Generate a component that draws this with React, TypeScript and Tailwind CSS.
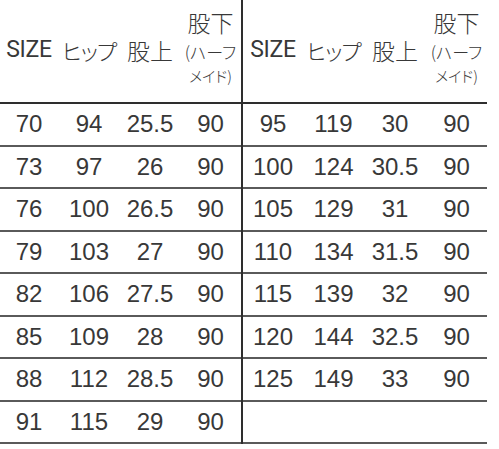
const leftRows: (string | number)[][] = [
  [70, 94, '25.5', 90],
  [73, 97, 26, 90],
  [76, 100, '26.5', 90],
  [79, 103, 27, 90],
  [82, 106, '27.5', 90],
  [85, 109, 28, 90],
  [88, 112, '28.5', 90],
  [91, 115, 29, 90],
];

const rightRows: ((string | number)[] | null)[] = [
  [95, 119, 30, 90],
  [100, 124, '30.5', 90],
  [105, 129, 31, 90],
  [110, 134, '31.5', 90],
  [115, 139, 32, 90],
  [120, 144, '32.5', 90],
  [125, 149, 33, 90],
  null,
];

const jp = "font-['Noto_Sans_CJK_JP',sans-serif] font-light [font-feature-settings:'palt']";

function Header() {
  return (
    <div className="contents">
      <div className="flex justify-center pt-[37px]">
        <span className="font-['Roboto',sans-serif] font-normal text-[23px] leading-[26px] tracking-[-0.3px]">SIZE</span>
      </div>
      <div className="flex justify-center pt-[36px]">
        <span className={`${jp} text-[22px] leading-[28px] tracking-[-1px]`}>ヒップ</span>
      </div>
      <div className="flex justify-center pt-[36px]">
        <span className={`${jp} text-[23px] leading-[28px]`}>股上</span>
      </div>
      <div className="flex flex-col items-center pt-[8px]">
        <span className={`${jp} text-[23px] leading-[28px]`}>股下</span>
        <span className={`${jp} text-[17px] leading-[20px] mt-[6px]`}>(ハーフ</span>
        <span className={`${jp} text-[15px] leading-[16px] mt-[6px]`}>メイド)</span>
      </div>
    </div>
  );
}

function Half({ rows, cols, className }: { rows: ((string | number)[] | null)[]; cols: string; className?: string }) {
  return (
    <div className={`flex flex-col ${className ?? ''}`}>
      <div className={`grid ${cols} h-[104px] border-b-2 border-[#2e2e2e]`}>
        <Header />
      </div>
      {rows.map((r, i) => (
        <div key={i} className={`grid ${cols} h-[42.5px] border-b-2 border-[#5a5a5a] items-center`}>
          {r &&
            r.map((v, j) => (
              <span key={j} className="text-center text-[24px] leading-none">
                {v}
              </span>
            ))}
        </div>
      ))}
    </div>
  );
}

export default function App() {
  return (
    <div className="w-[499px] h-[449px] bg-white text-[#383838] font-['Liberation_Sans',Arial,sans-serif]">
      <div className="flex w-[487px]">
        <Half rows={leftRows} cols="grid-cols-[58px_62px_60px_61px]" className="w-[243px] border-r-2 border-[#2e2e2e]" />
        <Half rows={rightRows} cols="grid-cols-[60px_61px_62px_61px]" className="w-[244px]" />
      </div>
    </div>
  );
}
